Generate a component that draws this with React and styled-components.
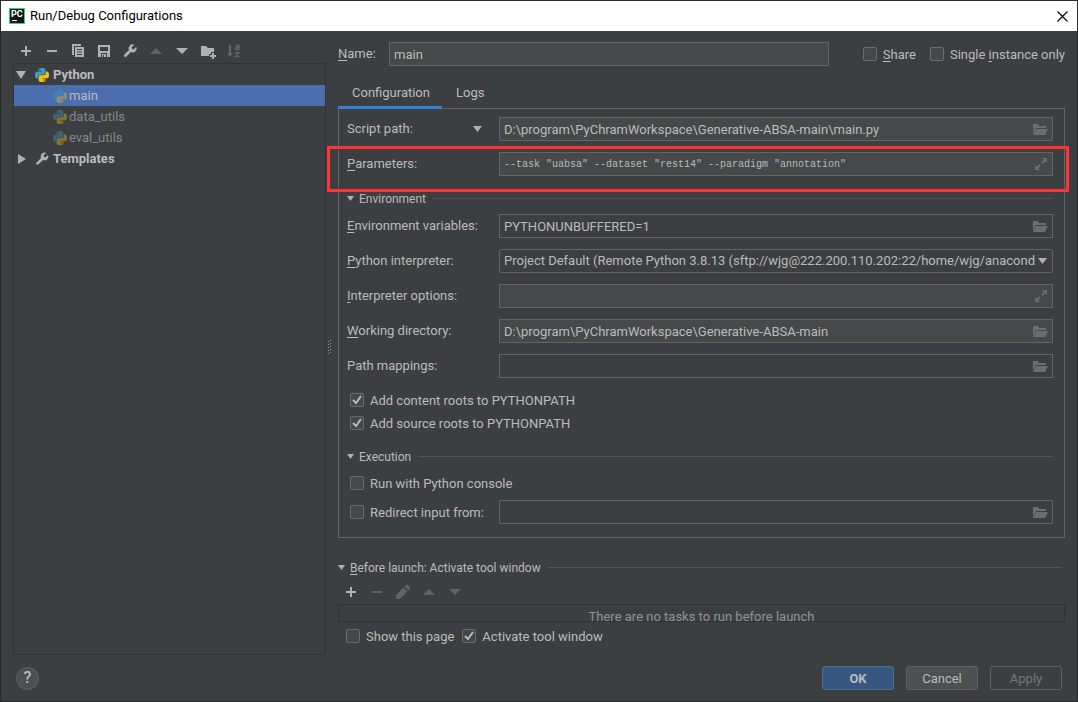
import React from 'react';
import styled, { createGlobalStyle, css } from 'styled-components';

const GlobalStyle = createGlobalStyle`
  * {
    box-sizing: border-box;
  }
  body {
    margin: 0;
    background: #3c3f41;
    color: #bbbbbb;
    font: 13px/16px Roboto, 'Noto Sans', sans-serif;
  }
  button, input, select {
    font: inherit;
    color: inherit;
    margin: 0;
    padding: 0;
  }
  u {
    text-underline-offset: 2px;
  }
  svg {
    display: block;
    flex: none;
  }
`;

const Window = styled.div`
  min-height: 100vh;
  display: flex;
  flex-direction: column;
  border: 1px solid #2b2b2b;
  background: #3c3f41;
`;

const TitleBar = styled.header`
  display: flex;
  align-items: center;
  gap: 5px;
  height: 30px;
  padding: 0 9px 0 8px;
  background: #ffffff;
  color: #000000;
  h1 {
    flex: 1;
    margin: 0;
    font-size: 13px;
    font-weight: 400;
  }
`;

const IconButton = styled.button`
  display: flex;
  align-items: center;
  justify-content: center;
  border: 0;
  background: none;
  color: ${props => props.$color || '#afb1b3'};
`;

const Body = styled.main`
  flex: 1;
  display: grid;
  grid-template-columns: 313px 12px minmax(0, 1fr);
  padding: 0 12px;
`;

const Sidebar = styled.aside`
  display: flex;
  flex-direction: column;
`;

const Toolbar = styled.div`
  display: flex;
  align-items: center;
  gap: 10px;
  height: ${props => props.$height}px;
  padding: ${props => props.$padding};
`;

const Tree = styled.ul`
  flex: 1;
  margin: 0;
  padding: 0;
  list-style: none;
  border: 1px solid #323232;
`;

const TreeItem = styled.li`
  display: flex;
  align-items: center;
  gap: ${props => (props.$child ? 2 : 4)}px;
  height: 21px;
  padding-left: ${props => (props.$child ? 39 : 2)}px;
  font-weight: ${props => (props.$child ? 400 : 700)};
  color: ${props => (props.$dim ? '#878787' : '#bbbbbb')};
  background: ${props => (props.$selected ? '#4b6eaf' : 'none')};
  > svg:first-child:not(:only-of-type) {
    margin-right: 5px;
  }
`;

const PythonMark = styled.svg`
  opacity: ${props => (props.$faded ? 0.4 : 1)};
`;

const Splitter = styled.div`
  display: flex;
  align-items: center;
  padding: 8px 0 0 2px;
`;

const Content = styled.section`
  display: flex;
  flex-direction: column;
`;

const NameRow = styled.div`
  display: flex;
  align-items: center;
  gap: 14px;
  margin-top: 11px;
  > label:first-child {
    width: 37px;
  }
  > div + label {
    margin-left: auto;
  }
`;

const Field = styled.div`
  flex: ${props => props.$flex || '1'};
  display: flex;
  align-items: center;
  min-width: 0;
  height: 24px;
  padding-right: 4px;
  border: 1px solid #646464;
  background: ${props => (props.$plain ? 'none' : '#45494a')};
`;

const TextInput = styled.input`
  flex: 1;
  min-width: 0;
  height: 22px;
  padding: 0 4px;
  border: 0;
  outline: 0;
  background: none;
  ${props =>
    props.$mono &&
    css`
      font-family: 'Liberation Mono', monospace;
      font-size: 10px;
    `}
`;

const Tabs = styled.div`
  display: flex;
  margin-top: 13px;
`;

const Tab = styled.button`
  height: 30px;
  padding: 0 12px 0 14px;
  line-height: 27px;
  border: 0;
  border-bottom: 3px solid ${props => (props.$active ? '#3880d4' : 'transparent')};
  background: none;
  z-index: 1;
`;

const Panel = styled.div`
  margin-top: -1px;
  padding: 8px 11px 13px 8px;
  border: 1px solid #646464;
`;

const FormRow = styled.div`
  position: relative;
  display: flex;
  align-items: center;
  height: 24px;
  & + & {
    margin-top: 11px;
  }
`;

const FormLabel = styled.label`
  flex: none;
  width: 152px;
`;

const ModeSelect = styled.div`
  display: grid;
  grid-template-columns: 135px 17px;
  align-items: center;
  > * {
    grid-row: 1;
  }
  select {
    grid-column: 1;
    height: 24px;
    border: 0;
    appearance: none;
    background: none;
  }
  svg {
    grid-column: 1;
    justify-self: end;
    pointer-events: none;
  }
`;

const Combo = styled.div`
  flex: 1;
  display: grid;
  min-width: 0;
  align-items: center;
  > * {
    grid-area: 1 / 1;
  }
  select {
    width: 100%;
    height: 24px;
    padding: 0 16px 0 4px;
    border: 1px solid #646464;
    border-radius: 3px;
    appearance: none;
    background: none;
  }
  svg {
    justify-self: end;
    margin-right: 6px;
    pointer-events: none;
  }
`;

const Highlight = styled.div`
  position: absolute;
  inset: -6px -16px -16px -20px;
  border: 3px solid #ff3535;
  pointer-events: none;
`;

const Heading = styled.h2`
  display: flex;
  align-items: center;
  gap: 5px;
  margin: ${props => props.$margin};
  height: 16px;
  font-size: 12px;
  font-weight: 400;
  > span {
    padding-top: 2px;
  }
  &::after {
    content: '';
    flex: 1;
    height: 1px;
    margin-left: 2px;
    background: #515456;
  }
`;

const CheckLabel = styled.label`
  display: flex;
  align-items: center;
  gap: 6px;
  height: 20px;
  > span:last-child {
    padding-top: 2px;
  }
`;

const CheckMark = styled.span`
  display: grid;
  > * {
    grid-area: 1 / 1;
  }
  input {
    width: 14px;
    height: 14px;
    appearance: none;
    border: 1px solid #6b6b6b;
    border-radius: 2px;
    background: #43494a;
  }
  svg {
    pointer-events: none;
    visibility: hidden;
  }
  input:checked + svg {
    visibility: visible;
  }
`;

const PanelChecks = styled.div`
  display: grid;
  gap: 3px;
  margin: 12px 0 0 3px;
`;

const RedirectRow = styled.div`
  display: flex;
  align-items: center;
  margin-top: 7px;
  > label {
    width: 149px;
    margin-left: 3px;
  }
`;

const RunConsole = styled.div`
  margin: 9px 0 0 3px;
`;

const TaskList = styled.div`
  height: 18px;
  margin-top: 2px;
  padding-top: 4px;
  border: 1px solid #323232;
  overflow: hidden;
  text-align: center;
  color: #929394;
`;

const LaunchChecks = styled.div`
  display: flex;
  gap: 8px;
  margin: 4px 0 0 8px;
`;

const Footer = styled.footer`
  display: flex;
  align-items: center;
  gap: 12px;
  height: 46px;
  padding: 0 15px;
`;

const HelpButton = styled.button`
  width: 23px;
  height: 23px;
  margin-right: auto;
  border: 1px solid #5e6060;
  border-radius: 50%;
  background: #4c5052;
  font-size: 16px;
  font-weight: 500;
`;

const Button = styled.button`
  width: 72px;
  height: 24px;
  padding-top: 1px;
  border: 1px solid ${props => (props.$primary ? '#4c708c' : '#5e6060')};
  border-radius: 3px;
  background: ${props => (props.$primary ? '#365880' : '#4c5052')};
  font-weight: ${props => (props.$primary ? 700 : 400)};
  &:disabled {
    background: none;
    color: #777777;
  }
`;

const Glyph = ({ children }) => (
  <svg width="16" height="16" viewBox="0 0 16 16" fill="currentColor" aria-hidden="true">
    {children}
  </svg>
);

const PlusIcon = () => <Glyph><path d="M7 3h2v4h4v2H9v4H7V9H3V7h4z" /></Glyph>;
const MinusIcon = () => <Glyph><path d="M3 7h10v2H3z" /></Glyph>;
const UpIcon = () => <Glyph><path d="M2 11l6-6 6 6z" /></Glyph>;
const DownIcon = () => <Glyph><path d="M2 5h12l-6 6z" /></Glyph>;

const CopyIcon = () => (
  <Glyph>
    <path d="M2 1h9v2H4v9H2z" />
    <path fillRule="evenodd" d="M5 4h9v10H5zM7 6v1h5V6zM7 8.500v1h5v-1zM7 11v1h5v-1z" />
  </Glyph>
);

const SaveIcon = () => (
  <Glyph><path fillRule="evenodd" d="M2 2h12v12h-3v-4H5v4H2zM4 4v4h8V4zM6 11h4v3H8v-2H7v2H6z" /></Glyph>
);

const WrenchIcon = ({ size = 16, viewBox = '0 0 24 24' }) => (
  <svg width={size} height={size} viewBox={viewBox} fill="#afb1b3" aria-hidden="true">
    <path d="M14.700 6.300a1 1 0 0 0 0 1.400l1.600 1.600a1 1 0 0 0 1.400 0l3.770-3.770a6 6 0 0 1-7.940 7.940l-6.910 6.910a2.120 2.120 0 0 1-3-3l6.910-6.910a6 6 0 0 1 7.940-7.940z" />
  </svg>
);

const NewFolderIcon = () => (
  <Glyph><path d="M1 3h5l2 2h6v4h-3v2H9v2H1zM12 10h2v2h2v2h-2v2h-2v-2h-2v-2h2z" /></Glyph>
);

const SortIcon = () => (
  <Glyph>
    <path d="M3 2h2v8h2l-3 4-3-4h2z" />
    <g fill="none" stroke="currentColor" strokeWidth="1.500">
      <path d="M9.500 2.500h3.500V7M13 4.500H9.800v1.900H13M9.300 9.700h3.400l-3.200 3.800h4" />
    </g>
  </Glyph>
);

const PencilIcon = () => (
  <Glyph><path d="M1 15v-4l7.500-7.500 4 4L5 15zM9.500 2.500l1.300-1.300a1.500 1.500 0 0 1 2 0l2 2a1.500 1.500 0 0 1 0 2l-1.300 1.300z" /></Glyph>
);

const FolderIcon = () => (
  <Glyph><path d="M1 3h5l1 2h7v2H4L1 13zM4 8h12l-3 6H1z" /></Glyph>
);

const ExpandIcon = () => (
  <Glyph>
    <path d="M10 2h5v5zM3 9v5h5z" />
    <path d="M13 4l-3 3M5 12l3-3" stroke="currentColor" strokeWidth="2" />
  </Glyph>
);

const SmallArrow = ({ width = 9, height = 6 }) => (
  <svg width={width} height={height} viewBox="0 0 10 6" preserveAspectRatio="none" fill="#afb1b3" aria-hidden="true">
    <path d="M0 0h10L5 6z" />
  </svg>
);

const CloseIcon = () => (
  <svg width="11" height="11" viewBox="0 0 11 11" stroke="#000000" strokeWidth="1.100" aria-hidden="true">
    <path d="M.5.500l10 10M10.500.500l-10 10" />
  </svg>
);

const AppIcon = () => (
  <svg width="16" height="16" viewBox="0 0 16 16" aria-hidden="true">
    <path fill="#21d789" d="M0 0h16v16H0z" />
    <path fill="#101414" d="M1 1h14v14H1z" />
    <path fill="#ffffff" d="M3 12h5v1H3z" />
    <text x="2" y="9" fontFamily="Roboto, sans-serif" fontWeight="700" fontSize="9" fill="#ffffff">PC</text>
  </svg>
);

const snake =
  'M14.250.180l.9.200.730.260.590.300.450.320.340.340.250.340.160.330.100.300.040.260.020.200-.010.130V8.500l-.050.630-.130.550-.210.460-.260.380-.300.310-.330.250-.350.190-.350.140-.330.100-.300.070-.260.040-.210.020H8.770l-.690.050-.590.140-.500.220-.410.270-.330.320-.270.350-.200.360-.150.370-.100.350-.070.320-.040.270-.020.210v3.060H3.170l-.210-.030-.280-.070-.320-.120-.350-.180-.360-.260-.360-.360-.350-.460-.320-.590-.280-.730-.210-.880-.140-1.050-.050-1.230.060-1.220.160-1.040.240-.870.320-.710.360-.570.400-.440.420-.330.420-.240.400-.160.360-.100.320-.050.240-.010h.160l.060.010h8.160v-.830H6.180l-.010-2.750-.020-.370.050-.340.110-.310.170-.280.250-.260.310-.230.380-.200.440-.180.510-.150.580-.120.640-.100.710-.060.770-.040.840-.020 1.270.050zm-6.300 1.980l-.230.330-.080.410.080.410.230.340.330.220.410.090.410-.090.330-.220.230-.340.080-.410-.080-.410-.230-.330-.330-.220-.410-.090-.410.090z';

const PythonIcon = ({ faded }) => (
  <PythonMark $faded={faded} width="14" height="14" viewBox="0 0 24 24" aria-hidden="true">
    <path fill="#3e9bc4" d={snake} />
    <path fill="#f4c20d" d={snake} transform="rotate(180 12 12)" />
  </PythonMark>
);

const GripIcon = () => (
  <svg width="4" height="15" viewBox="0 0 4 15" fill="#9a9c9d" aria-hidden="true">
    {[0, 3, 6, 9, 12].map(y => (
      <path key={y} d={`M0 ${y + 1}h1v1H0zM2 ${y}h1v1H2z`} />
    ))}
  </svg>
);

const Check = ({ children, checked }) => (
  <CheckLabel>
    <CheckMark>
      <input type="checkbox" defaultChecked={checked} />
      <svg width="14" height="14" viewBox="0 0 14 14" fill="none" stroke="#bbbbbb" strokeWidth="2" aria-hidden="true">
        <path d="M3 7l3 3 5-7" />
      </svg>
    </CheckMark>
    <span>{children}</span>
  </CheckLabel>
);

const PathField = ({ id, value = '', label, plain, mono, expand }) => (
  <Field $plain={plain}>
    <TextInput id={id} defaultValue={value} aria-label={label} $mono={mono} />
    <IconButton $color="#667073" aria-label={expand ? 'Expand' : 'Browse'}>
      {expand ? <ExpandIcon /> : <FolderIcon />}
    </IconButton>
  </Field>
);

const tools = [
  ['Add', PlusIcon],
  ['Remove', MinusIcon],
  ['Copy', CopyIcon],
  ['Save', SaveIcon],
  ['Edit templates', WrenchIcon],
  ['Move up', UpIcon, true],
  ['Move down', DownIcon],
  ['New folder', NewFolderIcon],
  ['Sort', SortIcon, true],
];

const launchTools = [
  ['Add task', PlusIcon],
  ['Remove task', MinusIcon, true],
  ['Edit task', PencilIcon, true],
  ['Task up', UpIcon, true],
  ['Task down', DownIcon, true],
];

const renderTools = list =>
  list.map(([name, Icon, off]) => (
    <IconButton key={name} aria-label={name} disabled={off} $color={off ? '#606263' : '#afb1b3'}>
      <Icon />
    </IconButton>
  ));

const App = () => {
  return (
    <Window>
      <GlobalStyle />
      <TitleBar>
        <AppIcon />
        <h1>Run/Debug Configurations</h1>
        <IconButton aria-label="Close"><CloseIcon /></IconButton>
      </TitleBar>
      <Body>
        <Sidebar>
          <Toolbar $height={32} $padding="8px 5px 0">{renderTools(tools)}</Toolbar>
          <Tree>
            <TreeItem>
              <SmallArrow width={10} height={8} />
              <PythonIcon />
              Python
            </TreeItem>
            <TreeItem $child $selected><PythonIcon faded />main</TreeItem>
            <TreeItem $child $dim><PythonIcon faded />data_utils</TreeItem>
            <TreeItem $child $dim><PythonIcon faded />eval_utils</TreeItem>
            <TreeItem>
              <svg width="10" height="10" viewBox="0 0 10 10" fill="#afb1b3" aria-hidden="true">
                <path d="M2 0l8 5-8 5z" />
              </svg>
              <WrenchIcon size={14} viewBox="1 1 22 22" />
              Templates
            </TreeItem>
          </Tree>
        </Sidebar>
        <Splitter><GripIcon /></Splitter>
        <Content>
          <NameRow>
            <label htmlFor="name"><u>N</u>ame:</label>
            <Field $flex="0 1 440px"><TextInput id="name" defaultValue="main" /></Field>
            <Check><u>S</u>hare</Check>
            <Check>Single <u>i</u>nstance only</Check>
          </NameRow>
          <Tabs>
            <Tab $active>Configuration</Tab>
            <Tab>Logs</Tab>
          </Tabs>
          <Panel>
            <FormRow>
              <ModeSelect>
                <select aria-label="Target type"><option>Script path:</option></select>
                <SmallArrow />
              </ModeSelect>
              <PathField label="Script path" value="D:\program\PyChramWorkspace\Generative-ABSA-main\main.py" />
            </FormRow>
            <FormRow>
              <FormLabel htmlFor="params"><u>P</u>arameters:</FormLabel>
              <PathField id="params" mono expand value={'--task "uabsa" --dataset "rest14" --paradigm "annotation"'} />
              <Highlight />
            </FormRow>
            <Heading $margin="14px 0 8px">
              <SmallArrow width={7} height={5} />
              <span>Environment</span>
            </Heading>
            <FormRow>
              <FormLabel htmlFor="env"><u>E</u>nvironment variables:</FormLabel>
              <PathField id="env" plain value="PYTHONUNBUFFERED=1" />
            </FormRow>
            <FormRow>
              <FormLabel htmlFor="interpreter"><u>P</u>ython interpreter:</FormLabel>
              <Combo>
                <select id="interpreter">
                  <option>Project Default (Remote Python 3.8.13 (sftp://wjg@222.200.110.202:22/home/wjg/anacond</option>
                </select>
                <SmallArrow />
              </Combo>
            </FormRow>
            <FormRow>
              <FormLabel htmlFor="options"><u>I</u>nterpreter options:</FormLabel>
              <PathField id="options" expand />
            </FormRow>
            <FormRow>
              <FormLabel htmlFor="workdir"><u>W</u>orking directory:</FormLabel>
              <PathField id="workdir" value="D:\program\PyChramWorkspace\Generative-ABSA-main" />
            </FormRow>
            <FormRow>
              <FormLabel htmlFor="mappings">Path mappings:</FormLabel>
              <PathField id="mappings" plain />
            </FormRow>
            <PanelChecks>
              <Check checked>Add content roots to PYTHONPATH</Check>
              <Check checked>Add source roots to PYTHONPATH</Check>
            </PanelChecks>
            <Heading $margin="15px 0 0">
              <SmallArrow width={7} height={5} />
              <span>Execution</span>
            </Heading>
            <RunConsole><Check>Run with Python console</Check></RunConsole>
            <RedirectRow>
              <Check>Redirect input from:</Check>
              <PathField label="Redirect input file" plain />
            </RedirectRow>
          </Panel>
          <Heading $margin="21px 3px 0 0">
            <SmallArrow width={7} height={5} />
            <span><u>B</u>efore launch: Activate tool window</span>
          </Heading>
          <Toolbar $height={27} $padding="7px 5px 0">{renderTools(launchTools)}</Toolbar>
          <TaskList>There are no tasks to run before launch</TaskList>
          <LaunchChecks>
            <Check>Show this page</Check>
            <Check checked>Activate tool window</Check>
          </LaunchChecks>
        </Content>
      </Body>
      <Footer>
        <HelpButton aria-label="Help">?</HelpButton>
        <Button $primary>OK</Button>
        <Button>Cancel</Button>
        <Button disabled>Apply</Button>
      </Footer>
    </Window>
  );
};

export default App;
